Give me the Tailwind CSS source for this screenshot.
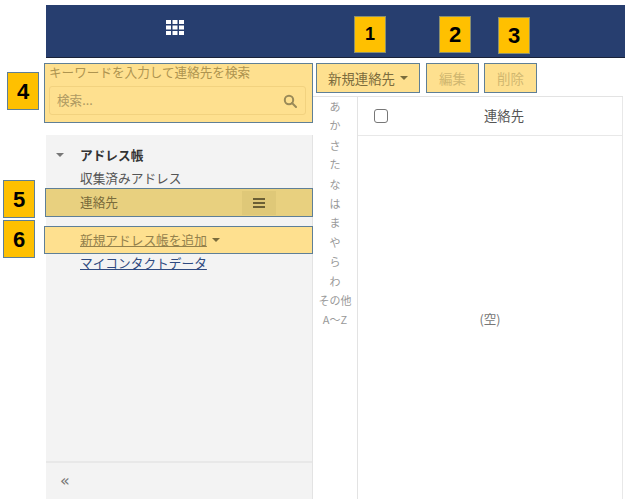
<!DOCTYPE html>
<html lang="ja">
<head>
    <meta charset="UTF-8">
    <title>連絡先</title>
    <script src="https://cdn.jsdelivr.net/npm/@tailwindcss/browser@4"></script>
</head>
<body class="bg-white font-['Noto_Sans_CJK_JP','Liberation_Sans',sans-serif] text-[#555]">
<div class="relative w-[630px] h-[501px] overflow-hidden pt-[5px] pl-[46px] pr-[5px]">

    <!-- Header -->
    <header class="h-[53px] bg-[#273e6f] border-b border-[#1a2238] pl-[120px] pt-[15px]">
        <svg width="18" height="15" viewBox="0 0 18 15" class="block" fill="#fff">
            <rect x="0" y="0" width="5" height="4"/><rect x="6.5" y="0" width="5" height="4"/><rect x="13" y="0" width="5" height="4"/>
            <rect x="0" y="5.5" width="5" height="4"/><rect x="6.5" y="5.5" width="5" height="4"/><rect x="13" y="5.5" width="5" height="4"/>
            <rect x="0" y="11" width="5" height="4"/><rect x="6.5" y="11" width="5" height="4"/><rect x="13" y="11" width="5" height="4"/>
        </svg>
    </header>

    <div class="flex h-[441px]">
        <!-- Left column -->
        <div class="w-[267px] flex flex-col">
            <div class="h-[77px] pt-[5px] shrink-0">
                <div class="-ml-[2px] h-[60px] bg-[#fee08f] border border-[#5f7f96] pl-[4px] pr-[6px]">
                    <p class="text-[12.6px] leading-[15px] text-[#ae9450] whitespace-nowrap">キーワードを入力して連絡先を検索</p>
                    <div class="mt-[7px] h-[29px] border border-[#f2d27f] rounded-[3px] flex items-center justify-between pl-[7px] pr-[8px]">
                        <span class="text-[12.6px] text-[#ae9a62]">検索...</span>
                        <svg width="14" height="14" viewBox="0 0 14 14" fill="none" stroke="#9a8a58" stroke-width="2"><circle cx="6" cy="6" r="4.2"/><path d="M9 9l4 4" stroke-linecap="round"/></svg>
                    </div>
                </div>
            </div>

            <!-- Sidebar -->
            <nav class="flex-1 bg-[#f3f3f3] border-r border-[#e3e3e3] flex flex-col">
                <div class="flex-1 pt-[8px]">
                    <div class="flex items-center h-[24px] pl-[10px]">
                        <span class="w-0 h-0 border-x-[4px] border-x-transparent border-t-[4px] border-t-[#777]"></span>
                        <span class="ml-[16px] text-[12.7px] font-bold text-[#333]">アドレス帳</span>
                    </div>
                    <div class="h-[21px] pl-[34px] text-[12.7px] leading-[21px] text-[#555]">収集済みアドレス</div>
                    <div class="h-[29px] -ml-[1px] -mr-[1px] bg-[#e8d07f] border border-[#5f7f96] flex items-center pl-[34px] pr-[36px] text-[12.7px] leading-[15px] text-[#7a6c3c]">
                        <span class="pb-[2px]">連絡先</span>
                        <span class="ml-auto w-[34px] h-[24px] bg-[#dfc878] flex flex-col justify-center items-center gap-[2px]">
                            <i class="block w-[12px] h-[2px] bg-[#6b5f35]"></i><i class="block w-[12px] h-[2px] bg-[#6b5f35]"></i><i class="block w-[12px] h-[2px] bg-[#6b5f35]"></i>
                        </span>
                    </div>
                    <div class="mt-[9px] -ml-[2px] -mr-[1px] h-[28px] bg-[#fee08f] border border-[#5f7f96] flex items-center pl-[35px] text-[12.7px] text-[#93814c]">
                        <span class="underline">新規アドレス帳を追加</span>
                        <span class="ml-[5px] w-0 h-0 border-x-[4px] border-x-transparent border-t-[4px] border-t-[#7a6c3c]"></span>
                    </div>
                    <div class="h-[20px] pl-[34px] text-[12.7px] leading-[17px] text-[#2f4a80] underline">マイコンタクトデータ</div>
                </div>
                <div class="h-[38px] border-t-2 border-[#e8e8e8] pl-[14px] flex items-center text-[16px] leading-none text-[#777] font-['DejaVu_Sans']">«</div>
            </nav>
        </div>

        <!-- Right column -->
        <div class="flex-1 flex flex-col">
            <div class="h-[38px] pt-[5px] pl-[3px] flex gap-[6px] shrink-0 text-[13.4px]">
                <div class="h-[30px] w-[104px] bg-[#fee08f] border border-[#5f7f96] flex items-center justify-center text-[#7c6c3d]">
                    新規連絡先<span class="ml-[5px] w-0 h-0 border-x-[4px] border-x-transparent border-t-[4px] border-t-[#7a6c3c]"></span>
                </div>
                <div class="h-[30px] w-[53px] bg-[#fee08f] border border-[#5f7f96] flex items-center justify-center text-[#d0b76f]">編集</div>
                <div class="h-[30px] w-[53px] -ml-[1px] bg-[#fee08f] border border-[#5f7f96] flex items-center justify-center text-[#d0b76f]">削除</div>
            </div>
            <div class="flex-1 flex border-t border-[#e3e3e3] mr-[2px]">
                <!-- Index -->
                <ul class="w-[45px] border-r border-[#e3e3e3] text-center text-[11px] leading-[19.4px] text-[#999]">
                    <li>あ</li><li>か</li><li>さ</li><li>た</li><li>な</li><li>は</li><li>ま</li><li>や</li><li>ら</li><li>わ</li><li>その他</li><li>A～Z</li>
                </ul>
                <!-- List -->
                <div class="flex-1 flex flex-col border-r border-[#e8e8e8]">
                    <div class="h-[39px] border-b border-[#e8e8e8] flex items-center relative">
                        <span class="absolute left-[16px] top-[12px] w-[14px] h-[14px] border border-[#777] rounded-[3px] bg-white"></span>
                        <span class="w-full text-center text-[13.3px] text-[#555] pl-[28px]">連絡先</span>
                    </div>
                    <div class="flex-1 flex items-center justify-center text-[12.5px] text-[#777] pt-[4px]">(空)</div>
                </div>
            </div>
        </div>
    </div>

    <!-- Callout numbers -->
    <div class="absolute left-[354px] top-[16px] w-[32px] h-[37px] bg-[#ffc000] border border-[#8a8f70] flex items-center justify-center text-[18px] font-bold text-black font-['Liberation_Sans']">1</div>
    <div class="absolute left-[439px] top-[16px] w-[32px] h-[37px] bg-[#ffc000] border border-[#8a8f70] flex items-center justify-center text-[22px] font-bold text-black font-['Liberation_Sans']">2</div>
    <div class="absolute left-[498px] top-[17px] w-[32px] h-[37px] bg-[#ffc000] border border-[#8a8f70] flex items-center justify-center text-[22px] font-bold text-black font-['Liberation_Sans']">3</div>
    <div class="absolute left-[7px] top-[72px] w-[32px] h-[38px] bg-[#ffc000] border border-[#5f7f96] flex items-center justify-center text-[22px] font-bold text-black font-['Liberation_Sans']">4</div>
    <div class="absolute left-[3px] top-[180px] w-[32px] h-[38px] bg-[#ffc000] border border-[#5f7f96] flex items-center justify-center text-[22px] font-bold text-black font-['Liberation_Sans']">5</div>
    <div class="absolute left-[3px] top-[220px] w-[32px] h-[38px] bg-[#ffc000] border border-[#5f7f96] flex items-center justify-center text-[22px] font-bold text-black font-['Liberation_Sans']">6</div>
</div>
</body>
</html>
